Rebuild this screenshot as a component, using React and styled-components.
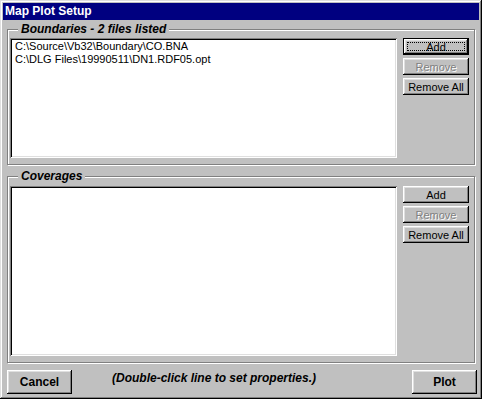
import React from "react";
import styled, { createGlobalStyle } from "styled-components";

const GlobalStyle = createGlobalStyle`
  html, body { margin: 0; padding: 0; background: #c0c0c0; }
  body { font-family: "Liberation Sans", Arial, sans-serif; font-size: 11px; color: #000; }
`;

const Window = styled.div`
  width: 482px;
  height: 399px;
  box-sizing: border-box;
  padding: 3px;
  background: #c0c0c0;
  box-shadow: inset -1px -1px #000, inset 1px 1px #dfdfdf,
    inset -2px -2px #808080, inset 2px 2px #fff;
  display: flex;
  flex-direction: column;
`;

const TitleBar = styled.div`
  height: 17px;
  background: #000080;
  color: #fff;
  font-weight: bold;
  font-size: 12px;
  line-height: 17px;
  padding-left: 2px;
  white-space: nowrap;
`;

const Body = styled.div`
  flex: 1;
  display: flex;
  flex-direction: column;
  padding: 2px 4px 0 4px;
  min-height: 0;
`;

const Group = styled.fieldset`
  margin: ${(p) => (p.$first ? "0" : "4px 0 0 0")};
  padding: ${(p) => (p.$first ? "2px" : "3px")} 5px 6px 2px;
  border: 1px solid #808080;
  box-shadow: inset 1px 1px #fff, 1px 1px #fff;
  display: flex;
  gap: 6px;
  min-width: 0;
  flex: ${(p) => (p.$grow ? "1" : "none")};
  min-height: 0;
`;

const Legend = styled.legend`
  margin-left: 8px;
  padding: 0 3px;
  font-size: 12px;
  line-height: 14px;
  font-weight: bold;
  font-style: italic;
  background: #c0c0c0;
`;

const ListBox = styled.div`
  flex: 1;
  height: ${(p) => (p.$height ? `${p.$height}px` : "auto")};
  background: #fff;
  box-shadow: inset 1px 1px #808080, inset -1px -1px #fff,
    inset 2px 2px #000, inset -2px -2px #dfdfdf;
  padding: 2px 5px;
  box-sizing: border-box;
  line-height: 13px;
  white-space: nowrap;
  overflow: hidden;
`;

const ButtonColumn = styled.div`
  display: flex;
  flex-direction: column;
  gap: 3px;
  width: 66px;
`;

const Button = styled.div`
  position: relative;
  box-sizing: border-box;
  width: ${(p) => p.$w || 66}px;
  height: ${(p) => p.$h || 17}px;
  display: flex;
  align-items: center;
  justify-content: center;
  background: #c0c0c0;
  font-size: ${(p) => (p.$bold ? "12px" : "11px")};
  font-weight: ${(p) => (p.$bold ? "bold" : "normal")};
  color: ${(p) => (p.$disabled ? "#808080" : "#000")};
  text-shadow: ${(p) => (p.$disabled ? "1px 1px #fff" : "none")};
  border: ${(p) => (p.$focused ? "1px solid #000" : "none")};
  box-shadow: inset -1px -1px #000, inset 1px 1px #fff,
    inset -2px -2px #808080, inset 2px 2px #dfdfdf;
  ${(p) =>
    p.$focused &&
    `
    &::after {
      content: "";
      position: absolute;
      inset: 3px;
      border: 1px dotted #000;
    }
  `}
`;

const BottomRow = styled.div`
  display: flex;
  align-items: flex-start;
  margin: 7px 0 2px 0;
  padding: 0 2px 0 4px;
`;

const Note = styled.div`
  margin-left: 40px;
  flex: 1;
  font-size: 12px;
  line-height: 14px;
  font-weight: bold;
  font-style: italic;
  padding-top: 1px;
`;

const Line = styled.div``;

const boundaries = [
  "C:\\Source\\Vb32\\Boundary\\CO.BNA",
  "C:\\DLG Files\\19990511\\DN1.RDF05.opt",
];

export default function App() {
  return (
    <>
      <GlobalStyle />
      <Window>
        <TitleBar>Map Plot Setup</TitleBar>
        <Body>
          <Group $first>
            <Legend>Boundaries - 2 files listed</Legend>
            <ListBox $height={120}>
              {boundaries.map((b) => (
                <Line key={b}>{b}</Line>
              ))}
            </ListBox>
            <ButtonColumn>
              <Button $focused>Add</Button>
              <Button $disabled>Remove</Button>
              <Button>Remove All</Button>
            </ButtonColumn>
          </Group>
          <Group $grow>
            <Legend>Coverages</Legend>
            <ListBox />
            <ButtonColumn>
              <Button>Add</Button>
              <Button $disabled>Remove</Button>
              <Button>Remove All</Button>
            </ButtonColumn>
          </Group>
        </Body>
        <BottomRow>
          <Button $bold $w={65} $h={24}>Cancel</Button>
          <Note>(Double-click line to set properties.)</Note>
          <Button $bold $w={65} $h={24}>Plot</Button>
        </BottomRow>
      </Window>
    </>
  );
}
